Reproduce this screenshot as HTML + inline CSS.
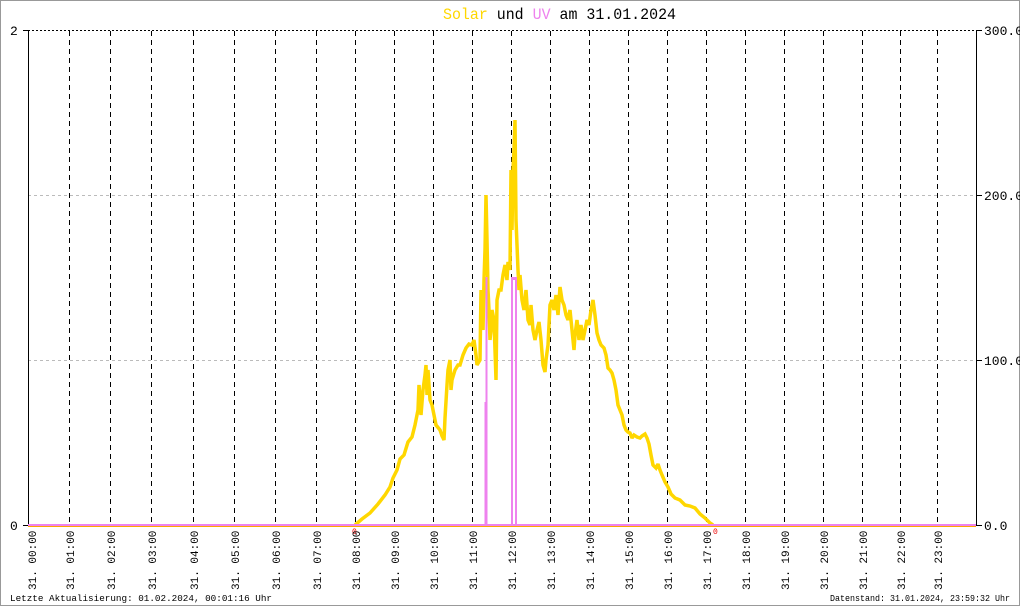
<!DOCTYPE html>
<html><head><meta charset="utf-8"><style>
html,body{margin:0;padding:0;background:#fff}
svg{display:block}
text{font-family:"Liberation Mono","DejaVu Sans Mono",monospace}
</style></head><body>
<svg width="1020" height="606" viewBox="0 0 1020 606" xmlns="http://www.w3.org/2000/svg">
<rect x="0.5" y="0.5" width="1019" height="605" fill="#fff" stroke="#999"/>
<text x="443" y="19" font-size="16" textLength="233" lengthAdjust="spacingAndGlyphs"><tspan fill="#ffd700">Solar</tspan> und <tspan fill="#ee82ee">UV</tspan> am 31.01.2024</text>
<line x1="28" y1="30.5" x2="976" y2="30.5" stroke="#000" stroke-dasharray="2,2"/>
<line x1="28" y1="195.5" x2="976" y2="195.5" stroke="#bbb" stroke-dasharray="3,3"/>
<line x1="28" y1="360.5" x2="976" y2="360.5" stroke="#bbb" stroke-dasharray="3,3"/>
<g stroke="#000" stroke-dasharray="5,4">
<line x1="69.5" y1="31" x2="69.5" y2="526"/><line x1="110.5" y1="31" x2="110.5" y2="526"/><line x1="151.5" y1="31" x2="151.5" y2="526"/><line x1="193.5" y1="31" x2="193.5" y2="526"/><line x1="234.5" y1="31" x2="234.5" y2="526"/><line x1="275.5" y1="31" x2="275.5" y2="526"/><line x1="316.5" y1="31" x2="316.5" y2="526"/><line x1="355.5" y1="31" x2="355.5" y2="526"/><line x1="394.5" y1="31" x2="394.5" y2="526"/><line x1="433.5" y1="31" x2="433.5" y2="526"/><line x1="472.5" y1="31" x2="472.5" y2="526"/><line x1="511.5" y1="31" x2="511.5" y2="526"/><line x1="550.5" y1="31" x2="550.5" y2="526"/><line x1="589.5" y1="31" x2="589.5" y2="526"/><line x1="628.5" y1="31" x2="628.5" y2="526"/><line x1="667.5" y1="31" x2="667.5" y2="526"/><line x1="706.5" y1="31" x2="706.5" y2="526"/><line x1="745.5" y1="31" x2="745.5" y2="526"/><line x1="784.5" y1="31" x2="784.5" y2="526"/><line x1="823.5" y1="31" x2="823.5" y2="526"/><line x1="862.5" y1="31" x2="862.5" y2="526"/><line x1="900.5" y1="31" x2="900.5" y2="526"/><line x1="937.5" y1="31" x2="937.5" y2="526"/>
</g>
<line x1="28.5" y1="30" x2="28.5" y2="526" stroke="#000"/>
<line x1="976.5" y1="30" x2="976.5" y2="526" stroke="#000"/>
<line x1="23" y1="30.5" x2="28" y2="30.5" stroke="#000"/>
<line x1="23" y1="525.5" x2="28" y2="525.5" stroke="#000"/>
<line x1="977" y1="30.5" x2="982" y2="30.5" stroke="#000"/>
<line x1="977" y1="195.5" x2="982" y2="195.5" stroke="#000"/>
<line x1="977" y1="360.5" x2="982" y2="360.5" stroke="#000"/>
<line x1="977" y1="525.5" x2="982" y2="525.5" stroke="#000"/>
<g font-size="13" fill="#000">
<text x="10" y="35">2</text><text x="10" y="530">0</text>
<text x="984" y="35">300.0</text><text x="984" y="200">200.0</text><text x="984" y="365">100.0</text><text x="984" y="530">0.0</text>
</g>
<polyline fill="none" stroke="#ffd700" stroke-width="3.5" stroke-linejoin="miter" stroke-miterlimit="2" points="355,525 362,519 370,513 378,504 385,495 390,487 393,478 397,470 400,459 404,455 408,442 412,437 415,425 418,410 419,385 421,415 423,390 425,375 426,365 427,395 428,370 430,400 432,405 435,420 436,425 440,430 442,436 444,440 445,418 447,385 448,370 450,360 451,390 452,380 455,370 458,365 460,365 463,355 466,348 469,344 472,345 474,340 476,355 477,365 480,360 481,290 483,330 484,280 485,250 486,195 487,240 488,290 489,310 490,340 491,330 492,310 494,320 496,380 497,300 499,290 501,290 503,275 505,265 507,280 508,262 510,270 511,170 512,230 513,170 514,150 515,120 516,220 518,270 519,290 520,275 522,300 524,310 526,290 528,320 530,325 531,305 533,330 535,340 537,330 539,322 541,340 543,365 545,372 546,360 548,345 550,305 552,300 554,310 556,295 558,315 560,287 562,300 564,305 566,315 568,320 570,310 572,330 574,350 575,335 577,320 579,340 581,325 583,340 585,330 587,320 589,325 591,310 593,300 595,315 597,333 599,340 601,345 604,348 606,355 608,368 610,370 612,373 614,380 616,390 618,405 620,410 622,415 624,425 626,430 628,432 630,433 632,438 634,435 637,437 640,438 642,436 645,434 647,438 649,444 651,455 653,465 656,468 658,464 660,470 662,475 665,482 668,487 671,494 675,498 680,500 685,505 690,506 695,508 700,514 705,518 710,523 713,525"/>
<line x1="28" y1="526.5" x2="976" y2="526.5" stroke="#ffa500" stroke-width="1"/>
<line x1="28" y1="525" x2="976" y2="525" stroke="#ee82ee" stroke-width="2"/>
<rect x="484.5" y="402" width="1.5" height="123" fill="#ee82ee"/>
<rect x="485.5" y="277" width="2" height="248" fill="#ee82ee"/>
<rect x="511" y="277" width="2" height="248" fill="#ee82ee"/>
<rect x="513" y="277" width="4" height="3" fill="#ee82ee"/>
<rect x="515" y="277" width="2" height="248" fill="#ee82ee"/>
<text x="352" y="534" font-size="8" fill="#e00">0</text>
<text x="713" y="534" font-size="8" fill="#e00">0</text>
<g font-size="11" fill="#000">
<text transform="translate(36,590) rotate(-90)">31. 00:00</text>
<text transform="translate(74,590) rotate(-90)">31. 01:00</text>
<text transform="translate(115,590) rotate(-90)">31. 02:00</text>
<text transform="translate(156,590) rotate(-90)">31. 03:00</text>
<text transform="translate(198,590) rotate(-90)">31. 04:00</text>
<text transform="translate(239,590) rotate(-90)">31. 05:00</text>
<text transform="translate(280,590) rotate(-90)">31. 06:00</text>
<text transform="translate(321,590) rotate(-90)">31. 07:00</text>
<text transform="translate(360,590) rotate(-90)">31. 08:00</text>
<text transform="translate(399,590) rotate(-90)">31. 09:00</text>
<text transform="translate(438,590) rotate(-90)">31. 10:00</text>
<text transform="translate(477,590) rotate(-90)">31. 11:00</text>
<text transform="translate(516,590) rotate(-90)">31. 12:00</text>
<text transform="translate(555,590) rotate(-90)">31. 13:00</text>
<text transform="translate(594,590) rotate(-90)">31. 14:00</text>
<text transform="translate(633,590) rotate(-90)">31. 15:00</text>
<text transform="translate(672,590) rotate(-90)">31. 16:00</text>
<text transform="translate(711,590) rotate(-90)">31. 17:00</text>
<text transform="translate(750,590) rotate(-90)">31. 18:00</text>
<text transform="translate(789,590) rotate(-90)">31. 19:00</text>
<text transform="translate(828,590) rotate(-90)">31. 20:00</text>
<text transform="translate(867,590) rotate(-90)">31. 21:00</text>
<text transform="translate(905,590) rotate(-90)">31. 22:00</text>
<text transform="translate(942,590) rotate(-90)">31. 23:00</text>
</g>
<text x="10" y="601" font-size="9" textLength="262" lengthAdjust="spacingAndGlyphs">Letzte Aktualisierung: 01.02.2024, 00:01:16 Uhr</text>
<text x="830" y="601" font-size="9" textLength="180" lengthAdjust="spacingAndGlyphs">Datenstand: 31.01.2024, 23:59:32 Uhr</text>
</svg>
</body></html>
